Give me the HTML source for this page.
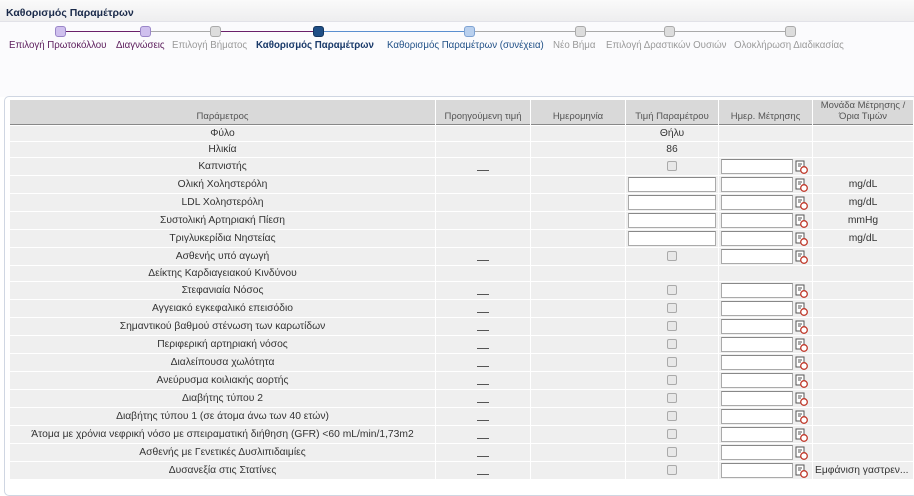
<!DOCTYPE html>
<html><head><meta charset="utf-8"><style>
*{margin:0;padding:0;box-sizing:border-box}
body{width:914px;height:487px;overflow:hidden;background:#fff;font-family:"Liberation Sans",Tahoma,sans-serif;position:relative;color:#333}
.title{position:absolute;left:0;top:0;width:914px;height:22px;background:linear-gradient(#fafafa,#eeeeef);border-bottom:1px solid #e2e2e8;font-size:10.5px;font-weight:bold;color:#1a2a4a;padding:7px 6px}
.stepbg{position:absolute;left:0;top:22px;width:914px;height:75px;background:#fbfbfd}
.ln{position:absolute;height:1px;top:31px}
.bx{position:absolute;top:26px;width:11px;height:11px;border-radius:3px}
.lb{position:absolute;top:40px;font-size:9.7px;white-space:nowrap}
.panel{position:absolute;left:4px;top:96px;width:914px;height:400px;border:1px solid #cfd6e2;border-radius:5px;background:#fff}
table{position:absolute;left:9px;top:99px;border-collapse:separate;border-spacing:1px;font-size:10.3px}
th{background:#d9d9d9;color:#555;font-weight:normal;height:25px;vertical-align:bottom;padding-bottom:2px;border-bottom:1px solid #888;font-size:9.5px}
td{background:#efefef;text-align:center;height:15px;padding:0;white-space:nowrap}
tr.r td{height:17px}
.in{display:inline-block;width:88px;height:15px;border:1px solid #aaa;border-top-color:#888;background:#fff;vertical-align:middle}
.ck{display:inline-block;width:10px;height:10px;border:1px solid #aaa;border-radius:2px;background:#e8e8e8;vertical-align:middle}
.dash{display:inline-block;width:12px;border-top:1px solid #555;vertical-align:middle;margin-top:8px}
.cal{display:inline-block;width:13px;height:14px;vertical-align:middle;margin-left:2px}
td.d{text-align:left;padding-left:2px}
</style></head><body>
<div class="title">Καθορισμός Παραμέτρων</div>
<div class="stepbg"></div>
<div class="ln" style="left:65px;width:78px;background:#6a1f6a"></div>
<div class="ln" style="left:150px;width:62px;background:#aaa"></div>
<div class="ln" style="left:220px;width:95px;background:#6a1f6a"></div>
<div class="ln" style="left:323px;width:143px;background:#5b8fd0"></div>
<div class="ln" style="left:474px;width:103px;background:#aaa"></div>
<div class="ln" style="left:585px;width:81px;background:#aaa"></div>
<div class="ln" style="left:674px;width:113px;background:#aaa"></div>
<div class="bx" style="left:55px;background:#cfc0ee;border:1px solid #9a86c8"></div>
<div class="bx" style="left:140px;background:#cfc0ee;border:1px solid #9a86c8"></div>
<div class="bx" style="left:210px;background:#ddd;border:1px solid #aaa"></div>
<div class="bx" style="left:313px;background:#1f4f86;border:1px solid #14365e"></div>
<div class="bx" style="left:464px;background:#b9d0ee;border:1px solid #7fa3d3"></div>
<div class="bx" style="left:575px;background:#ddd;border:1px solid #aaa"></div>
<div class="bx" style="left:664px;background:#ddd;border:1px solid #aaa"></div>
<div class="bx" style="left:785px;background:#ddd;border:1px solid #aaa"></div>
<div class="lb" style="left:9px;color:#5a1a5a">Επιλογή Πρωτοκόλλου</div>
<div class="lb" style="left:116px;color:#5a1a5a">Διαγνώσεις</div>
<div class="lb" style="left:172px;color:#999">Επιλογή Βήματος</div>
<div class="lb" style="left:256px;color:#1a3a6a;font-weight:bold">Καθορισμός Παραμέτρων</div>
<div class="lb" style="left:387px;color:#1f4f86">Καθορισμός Παραμέτρων (συνέχεια)</div>
<div class="lb" style="left:553px;color:#999">Νέο Βήμα</div>
<div class="lb" style="left:606px;color:#999">Επιλογή Δραστικών Ουσιών</div>
<div class="lb" style="left:734px;color:#999">Ολοκλήρωση Διαδικασίας</div>
<div class="panel"></div>
<table>
<tr><th style="width:425px">Παράμετρος</th><th style="width:94px">Προηγούμενη τιμή</th><th style="width:94px">Ημερομηνία</th><th style="width:92px">Τιμή Παραμέτρου</th><th style="width:93px">Ημερ. Μέτρησης</th><th style="width:100px">Μονάδα Μέτρησης /<br>Όρια Τιμών</th></tr>
<tr><td>Φύλο</td><td></td><td></td><td>Θήλυ</td><td></td><td></td></tr>
<tr><td>Ηλικία</td><td></td><td></td><td>86</td><td></td><td></td></tr>
<tr class="r"><td>Καπνιστής</td><td><span class="dash"></span></td><td></td><td><span class="ck"></span></td><td class="d"><span class="in" style="width:72px"></span><svg class="cal" viewBox="0 0 13 14"><rect x="1" y="1" width="8" height="10" fill="#fff" stroke="#555"/><path d="M3 4h4M3 6h3" stroke="#555"/><circle cx="9" cy="10" r="3.3" fill="#fff" stroke="#c0392b" stroke-width="1.3"/></svg></td><td></td></tr>
<tr class="r"><td>Ολική Χοληστερόλη</td><td></td><td></td><td><span class="in"></span></td><td class="d"><span class="in" style="width:72px"></span><svg class="cal" viewBox="0 0 13 14"><rect x="1" y="1" width="8" height="10" fill="#fff" stroke="#555"/><path d="M3 4h4M3 6h3" stroke="#555"/><circle cx="9" cy="10" r="3.3" fill="#fff" stroke="#c0392b" stroke-width="1.3"/></svg></td><td>mg/dL</td></tr>
<tr class="r"><td>LDL Χοληστερόλη</td><td></td><td></td><td><span class="in"></span></td><td class="d"><span class="in" style="width:72px"></span><svg class="cal" viewBox="0 0 13 14"><rect x="1" y="1" width="8" height="10" fill="#fff" stroke="#555"/><path d="M3 4h4M3 6h3" stroke="#555"/><circle cx="9" cy="10" r="3.3" fill="#fff" stroke="#c0392b" stroke-width="1.3"/></svg></td><td>mg/dL</td></tr>
<tr class="r"><td>Συστολική Αρτηριακή Πίεση</td><td></td><td></td><td><span class="in"></span></td><td class="d"><span class="in" style="width:72px"></span><svg class="cal" viewBox="0 0 13 14"><rect x="1" y="1" width="8" height="10" fill="#fff" stroke="#555"/><path d="M3 4h4M3 6h3" stroke="#555"/><circle cx="9" cy="10" r="3.3" fill="#fff" stroke="#c0392b" stroke-width="1.3"/></svg></td><td>mmHg</td></tr>
<tr class="r"><td>Τριγλυκερίδια Νηστείας</td><td></td><td></td><td><span class="in"></span></td><td class="d"><span class="in" style="width:72px"></span><svg class="cal" viewBox="0 0 13 14"><rect x="1" y="1" width="8" height="10" fill="#fff" stroke="#555"/><path d="M3 4h4M3 6h3" stroke="#555"/><circle cx="9" cy="10" r="3.3" fill="#fff" stroke="#c0392b" stroke-width="1.3"/></svg></td><td>mg/dL</td></tr>
<tr class="r"><td>Ασθενής υπό αγωγή</td><td><span class="dash"></span></td><td></td><td><span class="ck"></span></td><td class="d"><span class="in" style="width:72px"></span><svg class="cal" viewBox="0 0 13 14"><rect x="1" y="1" width="8" height="10" fill="#fff" stroke="#555"/><path d="M3 4h4M3 6h3" stroke="#555"/><circle cx="9" cy="10" r="3.3" fill="#fff" stroke="#c0392b" stroke-width="1.3"/></svg></td><td></td></tr>
<tr><td>Δείκτης Καρδιαγειακού Κινδύνου</td><td></td><td></td><td></td><td></td><td></td></tr>
<tr class="r"><td>Στεφανιαία Νόσος</td><td><span class="dash"></span></td><td></td><td><span class="ck"></span></td><td class="d"><span class="in" style="width:72px"></span><svg class="cal" viewBox="0 0 13 14"><rect x="1" y="1" width="8" height="10" fill="#fff" stroke="#555"/><path d="M3 4h4M3 6h3" stroke="#555"/><circle cx="9" cy="10" r="3.3" fill="#fff" stroke="#c0392b" stroke-width="1.3"/></svg></td><td></td></tr>
<tr class="r"><td>Αγγειακό εγκεφαλικό επεισόδιο</td><td><span class="dash"></span></td><td></td><td><span class="ck"></span></td><td class="d"><span class="in" style="width:72px"></span><svg class="cal" viewBox="0 0 13 14"><rect x="1" y="1" width="8" height="10" fill="#fff" stroke="#555"/><path d="M3 4h4M3 6h3" stroke="#555"/><circle cx="9" cy="10" r="3.3" fill="#fff" stroke="#c0392b" stroke-width="1.3"/></svg></td><td></td></tr>
<tr class="r"><td>Σημαντικού βαθμού στένωση των καρωτίδων</td><td><span class="dash"></span></td><td></td><td><span class="ck"></span></td><td class="d"><span class="in" style="width:72px"></span><svg class="cal" viewBox="0 0 13 14"><rect x="1" y="1" width="8" height="10" fill="#fff" stroke="#555"/><path d="M3 4h4M3 6h3" stroke="#555"/><circle cx="9" cy="10" r="3.3" fill="#fff" stroke="#c0392b" stroke-width="1.3"/></svg></td><td></td></tr>
<tr class="r"><td>Περιφερική αρτηριακή νόσος</td><td><span class="dash"></span></td><td></td><td><span class="ck"></span></td><td class="d"><span class="in" style="width:72px"></span><svg class="cal" viewBox="0 0 13 14"><rect x="1" y="1" width="8" height="10" fill="#fff" stroke="#555"/><path d="M3 4h4M3 6h3" stroke="#555"/><circle cx="9" cy="10" r="3.3" fill="#fff" stroke="#c0392b" stroke-width="1.3"/></svg></td><td></td></tr>
<tr class="r"><td>Διαλείπουσα χωλότητα</td><td><span class="dash"></span></td><td></td><td><span class="ck"></span></td><td class="d"><span class="in" style="width:72px"></span><svg class="cal" viewBox="0 0 13 14"><rect x="1" y="1" width="8" height="10" fill="#fff" stroke="#555"/><path d="M3 4h4M3 6h3" stroke="#555"/><circle cx="9" cy="10" r="3.3" fill="#fff" stroke="#c0392b" stroke-width="1.3"/></svg></td><td></td></tr>
<tr class="r"><td>Ανεύρυσμα κοιλιακής αορτής</td><td><span class="dash"></span></td><td></td><td><span class="ck"></span></td><td class="d"><span class="in" style="width:72px"></span><svg class="cal" viewBox="0 0 13 14"><rect x="1" y="1" width="8" height="10" fill="#fff" stroke="#555"/><path d="M3 4h4M3 6h3" stroke="#555"/><circle cx="9" cy="10" r="3.3" fill="#fff" stroke="#c0392b" stroke-width="1.3"/></svg></td><td></td></tr>
<tr class="r"><td>Διαβήτης τύπου 2</td><td><span class="dash"></span></td><td></td><td><span class="ck"></span></td><td class="d"><span class="in" style="width:72px"></span><svg class="cal" viewBox="0 0 13 14"><rect x="1" y="1" width="8" height="10" fill="#fff" stroke="#555"/><path d="M3 4h4M3 6h3" stroke="#555"/><circle cx="9" cy="10" r="3.3" fill="#fff" stroke="#c0392b" stroke-width="1.3"/></svg></td><td></td></tr>
<tr class="r"><td>Διαβήτης τύπου 1 (σε άτομα άνω των 40 ετών)</td><td><span class="dash"></span></td><td></td><td><span class="ck"></span></td><td class="d"><span class="in" style="width:72px"></span><svg class="cal" viewBox="0 0 13 14"><rect x="1" y="1" width="8" height="10" fill="#fff" stroke="#555"/><path d="M3 4h4M3 6h3" stroke="#555"/><circle cx="9" cy="10" r="3.3" fill="#fff" stroke="#c0392b" stroke-width="1.3"/></svg></td><td></td></tr>
<tr class="r"><td>Άτομα με χρόνια νεφρική νόσο με σπειραματική διήθηση (GFR) &lt;60 mL/min/1,73m2</td><td><span class="dash"></span></td><td></td><td><span class="ck"></span></td><td class="d"><span class="in" style="width:72px"></span><svg class="cal" viewBox="0 0 13 14"><rect x="1" y="1" width="8" height="10" fill="#fff" stroke="#555"/><path d="M3 4h4M3 6h3" stroke="#555"/><circle cx="9" cy="10" r="3.3" fill="#fff" stroke="#c0392b" stroke-width="1.3"/></svg></td><td></td></tr>
<tr class="r"><td>Ασθενής με Γενετικές Δυσλιπιδαιμίες</td><td><span class="dash"></span></td><td></td><td><span class="ck"></span></td><td class="d"><span class="in" style="width:72px"></span><svg class="cal" viewBox="0 0 13 14"><rect x="1" y="1" width="8" height="10" fill="#fff" stroke="#555"/><path d="M3 4h4M3 6h3" stroke="#555"/><circle cx="9" cy="10" r="3.3" fill="#fff" stroke="#c0392b" stroke-width="1.3"/></svg></td><td></td></tr>
<tr class="r"><td>Δυσανεξία στις Στατίνες</td><td><span class="dash"></span></td><td></td><td><span class="ck"></span></td><td class="d"><span class="in" style="width:72px"></span><svg class="cal" viewBox="0 0 13 14"><rect x="1" y="1" width="8" height="10" fill="#fff" stroke="#555"/><path d="M3 4h4M3 6h3" stroke="#555"/><circle cx="9" cy="10" r="3.3" fill="#fff" stroke="#c0392b" stroke-width="1.3"/></svg></td><td style="text-align:left;padding-left:2px">Εμφάνιση γαστρεν...</td></tr>
</table>
</body></html>
